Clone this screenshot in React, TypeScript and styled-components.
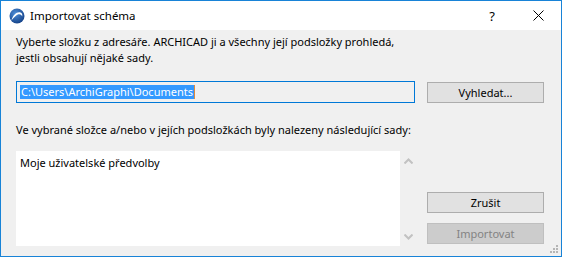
import React from "react"
import styled, { createGlobalStyle } from "styled-components"

const GlobalStyle = createGlobalStyle`
    html, body {
        margin: 0;
        padding: 0;
        background: #ffffff;
    }
    * { box-sizing: border-box; }
`

const App: React.FC = () => {
    return (
        <>
            <GlobalStyle />
            <Window>
                <TitleBar>
                    <AppIcon viewBox="0 0 16 16">
                        <defs>
                            <radialGradient id="ac" cx="40%" cy="35%" r="70%">
                                <stop offset="0%" stopColor="#4f8fd8" />
                                <stop offset="100%" stopColor="#123f86" />
                            </radialGradient>
                        </defs>
                        <circle cx="8" cy="8" r="7.5" fill="url(#ac)" />
                        <path d="M2.5 12.5 C4 6.5 8 3.5 11.5 4.5 C13 5 13.6 6.5 13.2 8.5 C12.4 6.6 10.6 5.8 8.8 6.6 C6.6 7.6 4.6 10 2.5 12.5 Z" fill="#ffffff" />
                    </AppIcon>
                    <Title>Importovat schéma</Title>
                    <HelpButton>?</HelpButton>
                    <CloseButton>
                        <svg width="11" height="11" viewBox="0 0 11 11">
                            <path d="M0.5 0.5 L10.5 10.5 M10.5 0.5 L0.5 10.5" stroke="#000" strokeWidth="1" />
                        </svg>
                    </CloseButton>
                </TitleBar>
                <Body>
                    <Intro>
                        Vyberte složku z adresáře. ARCHICAD ji a všechny její podsložky prohledá,<br />
                        jestli obsahují nějaké sady.
                    </Intro>
                    <PathRow>
                        <PathField>
                            <Selection>C:\Users\ArchiGraphi\Documents</Selection>
                            <Caret />
                        </PathField>
                        <Button>Vyhledat...</Button>
                    </PathRow>
                    <Label>Ve vybrané složce a/nebo v jejích podsložkách byly nalezeny následující sady:</Label>
                    <ListRow>
                        <ListBox>
                            <ListItems>
                                <Item>Moje uživatelské předvolby</Item>
                            </ListItems>
                            <ScrollBar>
                                <Arrow viewBox="0 0 9 6">
                                    <path d="M0.5 5.5 L4.5 1.5 L8.5 5.5" stroke="#c2c2c2" strokeWidth="2" fill="none" />
                                </Arrow>
                                <Arrow viewBox="0 0 9 6">
                                    <path d="M0.5 0.5 L4.5 4.5 L8.5 0.5" stroke="#c2c2c2" strokeWidth="2" fill="none" />
                                </Arrow>
                            </ScrollBar>
                        </ListBox>
                        <ButtonColumn>
                            <Button>Zrušit</Button>
                            <Button disabled>Importovat</Button>
                        </ButtonColumn>
                    </ListRow>
                    <Grip viewBox="0 0 10 10">
                        <rect x="7" y="1" width="2" height="2" fill="#b5b5b5" />
                        <rect x="4" y="4" width="2" height="2" fill="#b5b5b5" />
                        <rect x="7" y="4" width="2" height="2" fill="#b5b5b5" />
                        <rect x="1" y="7" width="2" height="2" fill="#b5b5b5" />
                        <rect x="4" y="7" width="2" height="2" fill="#b5b5b5" />
                        <rect x="7" y="7" width="2" height="2" fill="#b5b5b5" />
                    </Grip>
                </Body>
            </Window>
        </>
    )
}

export default App

const Window = styled.div`
    width: 562px;
    height: 257px;
    border: 1px solid #1883d7;
    display: flex;
    flex-direction: column;
    font-family: "Noto Sans", "Open Sans", sans-serif;
    font-size: 11px;
    color: #000;
    background: #f0f0f0;
`
const TitleBar = styled.div`
    height: 29px;
    background: #ffffff;
    display: flex;
    align-items: center;
    padding-left: 8px;
`
const AppIcon = styled.svg`
    width: 16px;
    height: 16px;
    margin-right: 5px;
`
const Title = styled.div`
    flex: 1;
    font-size: 11.5px;
    color: #000;
`
const HelpButton = styled.div`
    width: 30px;
    text-align: center;
    font-size: 13px;
    margin-right: 8px;
`
const CloseButton = styled.div`
    width: 46px;
    height: 29px;
    display: flex;
    align-items: center;
    justify-content: center;
`
const Body = styled.div`
    position: relative;
    flex: 1;
    padding: 4px 16px 0 15px;
    display: flex;
    flex-direction: column;
`
const Intro = styled.div`
    line-height: 16px;
`
const PathRow = styled.div`
    display: flex;
    align-items: center;
    margin-top: 15px;
    gap: 12px;
`
const PathField = styled.div`
    width: 399px;
    height: 22px;
    border: 1px solid #0078d7;
    display: flex;
    align-items: center;
    padding-left: 3px;
`
const Selection = styled.span`
    background: #3399ff;
    color: #ffffff;
    line-height: 14px;
    padding: 0 1px;
`
const Caret = styled.span`
    width: 1px;
    height: 14px;
    background: #e08a3c;
`
const Button = styled.button`
    width: 117px;
    height: 21px;
    padding: 0;
    font-family: inherit;
    font-size: 11px;
    color: #000;
    background: #e1e1e1;
    border: 1px solid #adadad;
    &:disabled {
        color: #838383;
        background: #cccccc;
        border-color: #bfbfbf;
    }
`
const Label = styled.div`
    margin-top: 19px;
    line-height: 16px;
`
const ListRow = styled.div`
    display: flex;
    align-items: flex-end;
    gap: 11px;
    margin-top: 13px;
`
const ListBox = styled.div`
    width: 400px;
    height: 95px;
    display: flex;
`
const ListItems = styled.div`
    flex: 1;
    background: #ffffff;
    padding: 4px 4px;
    line-height: 16px;
`
const Item = styled.div``
const ScrollBar = styled.div`
    width: 16px;
    display: flex;
    flex-direction: column;
    justify-content: space-between;
    align-items: center;
    padding: 7px 0 6px;
`
const Arrow = styled.svg`
    width: 9px;
    height: 6px;
`
const ButtonColumn = styled.div`
    display: flex;
    flex-direction: column;
    gap: 10px;
    padding-bottom: 2px;
`
const Grip = styled.svg`
    position: absolute;
    right: 2px;
    bottom: 2px;
    width: 10px;
    height: 10px;
`
